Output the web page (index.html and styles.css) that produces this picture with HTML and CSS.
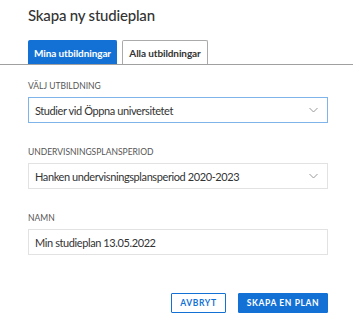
FILE: index.html
```html
<!DOCTYPE html>
<html lang="sv">
<head>
    <meta charset="UTF-8">
    <meta name="viewport" content="width=device-width, initial-scale=1.0">
    <title>Skapa ny studieplan</title>
    <link rel="stylesheet" href="styles.css">
</head>
<body>
    <div class="modal">
        <h1 class="title">Skapa ny studieplan</h1>

        <div class="tabs">
            <button class="tab active">Mina utbildningar</button>
            <button class="tab">Alla utbildningar</button>
        </div>

        <div class="content">
            <div class="field">
                <label class="label">Välj utbildning</label>
                <div class="select focused">
                    <span>Studier vid Öppna universitetet</span>
                    <svg class="chevron" width="9" height="6" viewBox="0 0 9 6"><path d="M0.5 1l4 4 4-4" fill="none" stroke="#999" stroke-width="1"/></svg>
                </div>
            </div>

            <div class="field">
                <label class="label">Undervisningsplansperiod</label>
                <div class="select">
                    <span>Hanken undervisningsplansperiod 2020-2023</span>
                    <svg class="chevron" width="9" height="6" viewBox="0 0 9 6"><path d="M0.5 1l4 4 4-4" fill="none" stroke="#999" stroke-width="1"/></svg>
                </div>
            </div>

            <div class="field">
                <label class="label">Namn</label>
                <div class="input">Min studieplan 13.05.2022</div>
            </div>

            <div class="actions">
                <button class="btn btn-outline">Avbryt</button>
                <button class="btn btn-primary">Skapa en plan</button>
            </div>
        </div>
    </div>
</body>
</html>
```

FILE: styles.css
```css
body {
    margin: 0;
    padding: 0;
    background: white;
    font-family: Lato, "Open Sans", sans-serif;
    color: #333;
}

.modal {
    width: 353px;
    height: 323px;
    overflow: hidden;
}

.title {
    margin: 0;
    padding: 6px 28px 0;
    font-size: 15px;
    font-weight: 500;
    line-height: 18px;
    letter-spacing: -0.2px;
    color: #333;
}

.tabs {
    display: flex;
    gap: 5px;
    margin-top: 16px;
    padding: 0 28px;
    border-bottom: 1px solid #a0a0a0;
}

.tab {
    height: 24px;
    padding: 0;
    font-family: inherit;
    font-size: 10px;
    font-weight: 700;
    letter-spacing: -0.1px;
    white-space: nowrap;
    border: 1px solid #aaa;
    border-bottom: none;
    border-radius: 2px 2px 0 0;
    background: white;
    color: #333;
}

.tab.active {
    width: 89px;
    background: #1371d6;
    border-color: #1371d6;
    color: white;
}

.tab:not(.active) {
    width: 86px;
}

.content {
    padding: 16px 25px 0 28px;
}

.field {
    margin-bottom: 24px;
}

.label {
    display: block;
    font-size: 8.5px;
    color: #555;
    text-transform: uppercase;
    line-height: 10px;
    margin-bottom: 6px;
}

.select, .input {
    display: flex;
    align-items: center;
    justify-content: space-between;
    height: 24px;
    padding: 0 9px 0 6px;
    border: 1px solid #e2e2e2;
    font-size: 11px;
    letter-spacing: -0.4px;
    color: #333;
}

.select.focused {
    border-color: #7fb4ea;
}

.actions {
    display: flex;
    justify-content: flex-end;
    gap: 12px;
    margin-top: 38px;
}

.btn {
    height: 20px;
    padding: 0;
    font-family: inherit;
    font-size: 8.5px;
    font-weight: 700;
    letter-spacing: 0.6px;
    white-space: nowrap;
    text-transform: uppercase;
    border-radius: 1px;
}

.btn-outline {
    width: 55px;
    background: white;
    color: #1371d6;
    border: 1px solid #1371d6;
}

.btn-primary {
    width: 90px;
    background: #1371d6;
    color: white;
    border: 1px solid #1371d6;
}
```
